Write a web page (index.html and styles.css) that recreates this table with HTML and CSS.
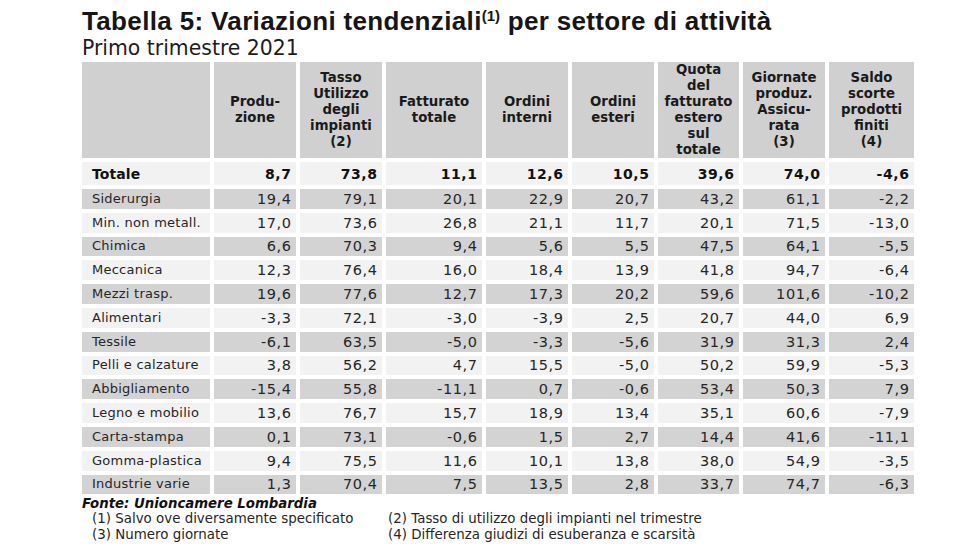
FILE: index.html
```html
<!DOCTYPE html>
<html lang="it">
<head>
<meta charset="utf-8">
<title>Tabella 5</title>
<link rel="stylesheet" href="styles.css">
</head>
<body>
<div class="page">
  <h1 class="title">Tabella 5: Variazioni tendenziali<sup class="sup">(1)</sup> per settore di attività</h1>
  <p class="subtitle">Primo trimestre 2021</p>
  <table class="grid">
    <thead>
      <tr class="head">
        <th class="c-label"></th>
        <th class="c-prod">Produ-<br>zione</th>
        <th class="c-tasso">Tasso<br>Utilizzo<br>degli<br>impianti<br>(2)</th>
        <th class="c-fatt">Fatturato<br>totale</th>
        <th class="c-oi">Ordini<br>interni</th>
        <th class="c-oe">Ordini<br>esteri</th>
        <th class="c-quota">Quota<br>del<br>fatturato<br>estero<br>sul<br>totale</th>
        <th class="c-gior">Giornate<br>produz.<br>Assicu-<br>rata<br>(3)</th>
        <th class="c-saldo">Saldo<br>scorte<br>prodotti<br>finiti<br>(4)</th>
      </tr>
    </thead>
    <tbody>
      <tr class="row total"><td class="lbl">Totale</td><td>8,7</td><td>73,8</td><td>11,1</td><td>12,6</td><td>10,5</td><td>39,6</td><td>74,0</td><td>-4,6</td></tr>
      <tr class="row dark"><td class="lbl">Siderurgia</td><td>19,4</td><td>79,1</td><td>20,1</td><td>22,9</td><td>20,7</td><td>43,2</td><td>61,1</td><td>-2,2</td></tr>
      <tr class="row light"><td class="lbl">Min. non metall.</td><td>17,0</td><td>73,6</td><td>26,8</td><td>21,1</td><td>11,7</td><td>20,1</td><td>71,5</td><td>-13,0</td></tr>
      <tr class="row dark"><td class="lbl">Chimica</td><td>6,6</td><td>70,3</td><td>9,4</td><td>5,6</td><td>5,5</td><td>47,5</td><td>64,1</td><td>-5,5</td></tr>
      <tr class="row light"><td class="lbl">Meccanica</td><td>12,3</td><td>76,4</td><td>16,0</td><td>18,4</td><td>13,9</td><td>41,8</td><td>94,7</td><td>-6,4</td></tr>
      <tr class="row dark"><td class="lbl">Mezzi trasp.</td><td>19,6</td><td>77,6</td><td>12,7</td><td>17,3</td><td>20,2</td><td>59,6</td><td>101,6</td><td>-10,2</td></tr>
      <tr class="row light"><td class="lbl">Alimentari</td><td>-3,3</td><td>72,1</td><td>-3,0</td><td>-3,9</td><td>2,5</td><td>20,7</td><td>44,0</td><td>6,9</td></tr>
      <tr class="row dark"><td class="lbl">Tessile</td><td>-6,1</td><td>63,5</td><td>-5,0</td><td>-3,3</td><td>-5,6</td><td>31,9</td><td>31,3</td><td>2,4</td></tr>
      <tr class="row light"><td class="lbl">Pelli e calzature</td><td>3,8</td><td>56,2</td><td>4,7</td><td>15,5</td><td>-5,0</td><td>50,2</td><td>59,9</td><td>-5,3</td></tr>
      <tr class="row dark"><td class="lbl">Abbigliamento</td><td>-15,4</td><td>55,8</td><td>-11,1</td><td>0,7</td><td>-0,6</td><td>53,4</td><td>50,3</td><td>7,9</td></tr>
      <tr class="row light"><td class="lbl">Legno e mobilio</td><td>13,6</td><td>76,7</td><td>15,7</td><td>18,9</td><td>13,4</td><td>35,1</td><td>60,6</td><td>-7,9</td></tr>
      <tr class="row dark"><td class="lbl">Carta-stampa</td><td>0,1</td><td>73,1</td><td>-0,6</td><td>1,5</td><td>2,7</td><td>14,4</td><td>41,6</td><td>-11,1</td></tr>
      <tr class="row light"><td class="lbl">Gomma-plastica</td><td>9,4</td><td>75,5</td><td>11,6</td><td>10,1</td><td>13,8</td><td>38,0</td><td>54,9</td><td>-3,5</td></tr>
      <tr class="row dark"><td class="lbl">Industrie varie</td><td>1,3</td><td>70,4</td><td>7,5</td><td>13,5</td><td>2,8</td><td>33,7</td><td>74,7</td><td>-6,3</td></tr>
    </tbody>
  </table>
  <p class="source">Fonte: Unioncamere Lombardia</p>
  <div class="notes">
    <span>(1) Salvo ove diversamente specificato</span>
    <span>(2) Tasso di utilizzo degli impianti nel trimestre</span>
    <span>(3) Numero giornate</span>
    <span>(4) Differenza giudizi di esuberanza e scarsità</span>
  </div>
</div>
</body>
</html>
```

FILE: styles.css
```css
html, body {
  margin: 0;
  padding: 0;
  background: #ffffff;
}

.page {
  padding: 7px 0 0 82px;
  color: #1c1c1c;
  font-family: "DejaVu Sans", Verdana, sans-serif;
}

.title {
  margin: 0;
  font-family: "Liberation Sans", Arial, sans-serif;
  font-weight: bold;
  font-size: 26px;
  letter-spacing: 0.35px;
  line-height: 28px;
  color: #161616;
}

.sup {
  font-size: 15px;
  letter-spacing: 0;
  vertical-align: 9px;
  line-height: 0;
}

.subtitle {
  margin: 4px 0 0 0;
  font-size: 20.4px;
  line-height: 19px;
  color: #1c1c1c;
}

.grid {
  margin: 0 0 0 -4px;
  border-collapse: separate;
  border-spacing: 4px 4px;
  font-size: 13px;
}

.grid th {
  background: #d0d0d0;
  font-weight: bold;
  font-size: 13.3px;
  line-height: 16px;
  height: 94px;
  padding: 0;
  text-align: center;
  vertical-align: middle;
  color: #1a1a1a;
}

.c-label { width: 128px; }
.c-prod { width: 82px; }
.c-tasso { width: 82px; }
.c-fatt { width: 96px; }
.c-oi { width: 82px; }
.c-oe { width: 82px; }
.c-quota { width: 81px; }
.c-gior { width: 82px; }
.c-saldo { width: 85px; }

.grid td {
  padding: 0 4.4px 0 0;
  height: 19.8px;
  font-size: 14.5px;
  letter-spacing: 0.6px;
  line-height: 16px;
  text-align: right;
  vertical-align: middle;
  color: #262626;
}

.grid td.lbl {
  text-align: left;
  padding: 0 0 0 10px;
  font-size: 13px;
  letter-spacing: 0.25px;
}

.row.dark td { background: #d3d3d3; }
.row.light td { background: #f2f2f2; }

.row.total td {
  background: #f2f2f2;
  height: 23px;
  font-weight: bold;
  font-size: 14px;
  letter-spacing: 0.6px;
  color: #111111;
}

.row.total td.lbl {
  font-size: 14px;
  letter-spacing: 0.1px;
}

.source {
  margin: -2px 0 0 0;
  font-size: 13.3px;
  line-height: 15px;
  font-weight: bold;
  font-style: italic;
  color: #111111;
}

.notes {
  display: grid;
  grid-template-columns: 296px auto;
  padding-left: 10px;
  font-size: 13.4px;
  line-height: 16px;
  color: #262626;
}
```
